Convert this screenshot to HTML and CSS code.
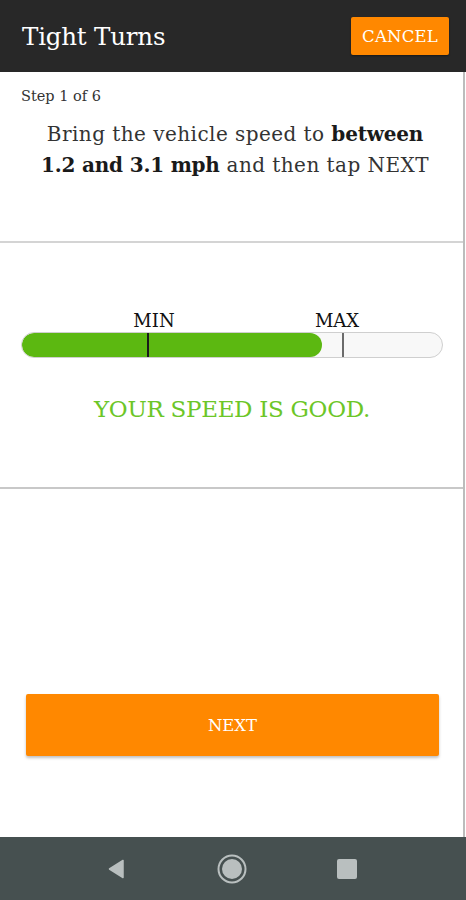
FILE: index.html
```html
<!DOCTYPE html>
<html>
<head>
<meta charset="utf-8">
<link rel="stylesheet" href="styles.css">
</head>
<body>
<div class="screen">
  <header class="topbar">
    <h1 class="title">Tight Turns</h1>
    <button class="cancel">CANCEL</button>
  </header>
  <main class="content">
    <section class="intro">
      <div class="step">Step 1 of 6</div>
      <p class="instruction">Bring the vehicle speed to <b>between 1.2 and 3.1 mph</b> and then tap NEXT</p>
    </section>
    <section class="gauge">
      <div class="labels">
        <span class="lbl lbl-min">MIN</span>
        <span class="lbl lbl-max">MAX</span>
      </div>
      <div class="bar">
        <div class="fill" style="width: 71.5%"></div>
        <div class="tick tick-min"></div>
        <div class="tick tick-max"></div>
      </div>
      <div class="status">YOUR SPEED IS GOOD.</div>
    </section>
    <section class="actions">
      <button class="next">NEXT</button>
    </section>
  </main>
  <nav class="navbar">
    <svg class="nav-icon" width="24" height="24" viewBox="0 0 24 24"><path d="M19 3.5 L19 20.5 L5.5 12 Z" fill="#b9bfbf" stroke="#b9bfbf" stroke-width="1.5" stroke-linejoin="round"/></svg>
    <svg class="nav-icon" width="32" height="32" viewBox="0 0 32 32"><circle cx="16" cy="16" r="13.5" fill="none" stroke="#b9bfbf" stroke-width="2"/><circle cx="16" cy="16" r="10" fill="#b9bfbf"/></svg>
    <svg class="nav-icon" width="24" height="24" viewBox="0 0 24 24"><rect x="2" y="2" width="20" height="20" rx="2" fill="#b9bfbf"/></svg>
  </nav>
</div>
</body>
</html>
```
FILE: styles.css
```css
* { box-sizing: border-box; }
html, body { margin: 0; padding: 0; }
body {
  width: 466px;
  height: 900px;
  font-family: "DejaVu Serif", "Liberation Serif", serif;
  background: #ffffff;
  color: #222;
}
.screen {
  display: flex;
  flex-direction: column;
  height: 900px;
}
.topbar {
  height: 72px;
  background: #282828;
  display: flex;
  align-items: center;
  justify-content: space-between;
  padding: 0 17px 0 22px;
}
.title {
  margin: 0;
  font-size: 24.5px;
  font-weight: normal;
  color: #ffffff;
  letter-spacing: -0.2px;
}
.cancel {
  height: 38px;
  width: 98px;
  background: #ff8800;
  color: #ffffff;
  border: none;
  border-radius: 2px;
  font-family: inherit;
  font-size: 16.5px;
  letter-spacing: 0.2px;
  padding: 0;
  box-shadow: 0 1px 2px rgba(0,0,0,0.4);
}
.content {
  flex: 1;
  display: flex;
  flex-direction: column;
  width: 465px;
  border-right: 2px solid #bcbcbc;
}
.intro {
  height: 171px;
  border-bottom: 2px solid #d4d4d4;
  padding: 15px 0 0 21px;
}
.step {
  font-size: 14.5px;
  line-height: 18px;
  color: #333;
}
.instruction {
  width: 392px;
  margin: 14px 0 0 18px;
  text-align: center;
  font-size: 20px;
  line-height: 31px;
  color: #333;
  letter-spacing: 0.45px;
}
.instruction b { font-weight: bold; color: #1a1a1a; letter-spacing: -0.2px; }
.gauge {
  height: 246px;
  border-bottom: 2px solid #c8c8c8;
  padding: 66px 20px 0 21px;
}
.labels {
  position: relative;
  height: 23px;
}
.lbl {
  position: absolute;
  top: 0;
  font-size: 18px;
  line-height: 23px;
  color: #111;
  transform: translateX(-50%);
}
.lbl-min { left: 133px; }
.lbl-max { left: 316px; }
.bar {
  position: relative;
  height: 26px;
  border: 1px solid #cfcfcf;
  border-radius: 13px;
  background: #f8f8f8;
  overflow: hidden;
}
.fill {
  height: 100%;
  background: #5cb811;
  border-radius: 13px;
}
.tick {
  position: absolute;
  top: 0;
  bottom: 0;
  width: 2px;
}
.tick-min { left: 125px; background: #1a1a1a; }
.tick-max { left: 320px; background: #6b6b6b; }
.status {
  margin-top: 37px;
  text-align: center;
  font-size: 23px;
  line-height: 28px;
  color: #6cc628;
  letter-spacing: -0.3px;
}
.actions {
  flex: 1;
  padding: 205px 25px 0 26px;
}
.next {
  width: 413px;
  height: 62px;
  background: #ff8800;
  color: #ffffff;
  border: none;
  border-radius: 2px;
  font-family: inherit;
  font-size: 16.5px;
  padding: 0;
  box-shadow: 0 2px 3px rgba(0,0,0,0.25);
}
.navbar {
  height: 63px;
  background: #465050;
  display: flex;
  align-items: center;
  justify-content: space-between;
  padding: 0 107px 0 104px;
}
.nav-icon { display: block; }
```
